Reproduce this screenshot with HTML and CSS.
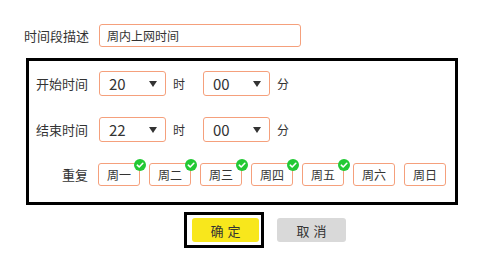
FILE: index.html
```html
<!DOCTYPE html>
<html lang="zh-CN">
<head>
    <meta charset="UTF-8">
    <meta name="viewport" content="width=device-width, initial-scale=1.0">
    <title>时间段设置</title>
    <link rel="stylesheet" href="styles.css">
</head>
<body>
    <div class="page">
        <div class="desc-row">
            <label class="desc-label">时间段描述</label>
            <input class="desc-input" type="text" value="周内上网时间">
        </div>

        <div class="period">
            <div class="row">
                <span class="row-label">开始时间</span>
                <div class="select"><span>20</span><i class="arrow"></i></div>
                <span class="unit">时</span>
                <div class="select"><span>00</span><i class="arrow"></i></div>
                <span class="unit">分</span>
            </div>
            <div class="row">
                <span class="row-label">结束时间</span>
                <div class="select"><span>22</span><i class="arrow"></i></div>
                <span class="unit">时</span>
                <div class="select"><span>00</span><i class="arrow"></i></div>
                <span class="unit">分</span>
            </div>
            <div class="row">
                <span class="row-label">重复</span>
                <div class="days">
                    <span class="day checked">周一</span>
                    <span class="day checked">周二</span>
                    <span class="day checked">周三</span>
                    <span class="day checked">周四</span>
                    <span class="day checked">周五</span>
                    <span class="day">周六</span>
                    <span class="day">周日</span>
                </div>
            </div>
        </div>

        <div class="actions">
            <div class="focus-ring">
                <button class="btn btn-ok">确定</button>
            </div>
            <button class="btn btn-cancel">取消</button>
        </div>
    </div>
</body>
</html>
```

FILE: styles.css
```css
body {
    margin: 0;
    font-family: "Noto Sans CJK SC", "Noto Sans", sans-serif;
    color: #333;
    background-color: #fff;
}

.page {
    padding-top: 24px;
}

.desc-row {
    display: flex;
    align-items: center;
    margin-left: 24px;
    height: 23px;
}

.desc-label {
    width: 75px;
    font-size: 13px;
    line-height: 23px;
}

.desc-input {
    width: 202px;
    height: 23px;
    box-sizing: border-box;
    border: 1px solid #f5a07c;
    border-radius: 3px;
    padding: 0 7px;
    font-family: inherit;
    font-size: 12px;
    color: #333;
    outline: none;
}

.period {
    margin: 11px 0 0 26px;
    width: 432px;
    height: 147px;
    box-sizing: border-box;
    border: 3px solid #000;
    padding-top: 10px;
}

.row {
    display: flex;
    align-items: center;
    margin-bottom: 21px;
}

.row-label {
    width: 59px;
    margin-right: 11px;
    text-align: right;
    font-size: 13px;
}

.select {
    display: flex;
    align-items: center;
    justify-content: space-between;
    width: 67px;
    height: 25px;
    box-sizing: border-box;
    border: 1px solid #f5a07c;
    border-radius: 3px;
    padding: 0 8px 0 9px;
    font-size: 15px;
    line-height: 23px;
}

.arrow {
    width: 0;
    height: 0;
    border-left: 4px solid transparent;
    border-right: 4px solid transparent;
    border-top: 6px solid #333;
}

.unit {
    width: 13px;
    margin: 0 17px 0 7px;
    font-size: 12px;
}

.days {
    display: flex;
    gap: 9px;
    margin-left: -1px;
}

.day {
    position: relative;
    width: 42px;
    height: 23px;
    box-sizing: border-box;
    border: 1px solid #f5a07c;
    border-radius: 3px;
    font-size: 12px;
    line-height: 21px;
    text-align: center;
}

.day.checked::after {
    content: "";
    position: absolute;
    top: -5px;
    right: -7px;
    width: 12px;
    height: 12px;
    border-radius: 50%;
    background: #22c934 url("data:image/svg+xml,%3Csvg xmlns='http://www.w3.org/2000/svg' viewBox='0 0 12 12'%3E%3Cpath d='M3.3 6.2 5.2 8 8.8 4.3' fill='none' stroke='white' stroke-width='1.6' stroke-linecap='round' stroke-linejoin='round'/%3E%3C/svg%3E") center / 12px 12px no-repeat;
}

.actions {
    display: flex;
    align-items: center;
    margin: 7px 0 0 184px;
}

.focus-ring {
    border: 3px solid #000;
    padding: 3px 2px 3px 5px;
    margin-right: 13px;
}

.btn {
    display: block;
    height: 24px;
    border: none;
    border-radius: 3px;
    font-family: inherit;
    font-size: 13px;
    color: #333;
    letter-spacing: 4px;
    padding: 0 0 0 4px;
    cursor: pointer;
}

.btn-ok {
    width: 67px;
    background-color: #f8e71c;
}

.btn-cancel {
    width: 69px;
    background-color: #d9d9d9;
}
```
